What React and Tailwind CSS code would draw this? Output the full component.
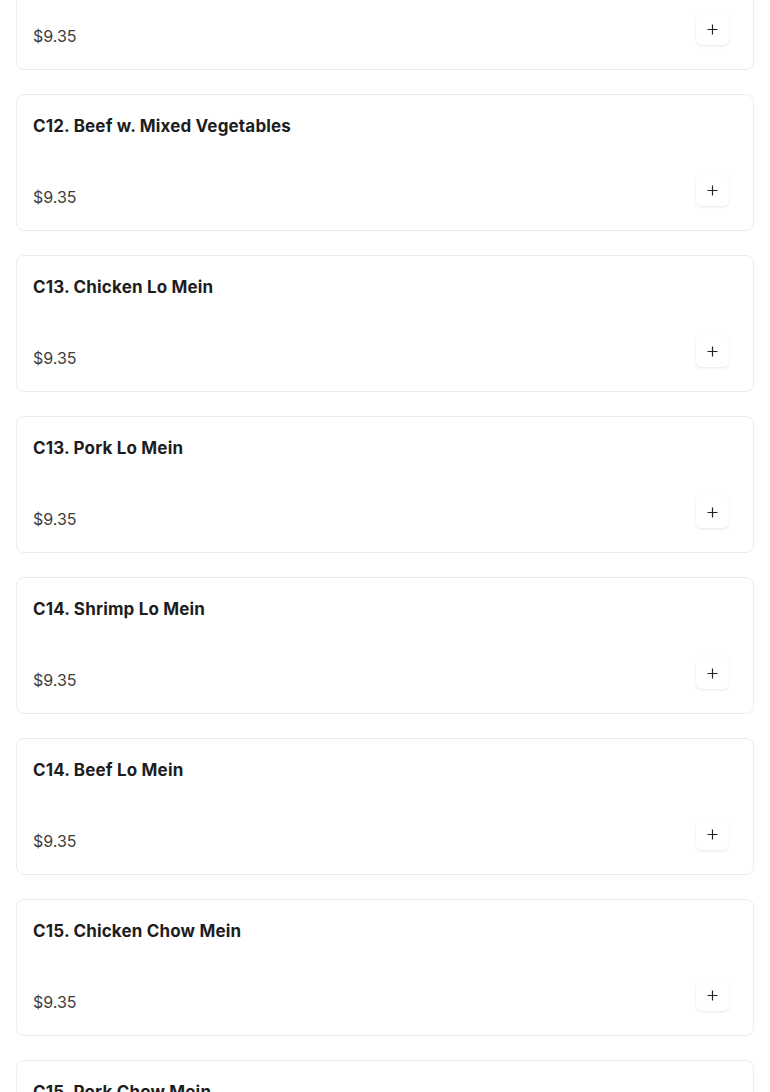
import React from 'react';

const items = [
  { id: 'c12a', name: 'C12. Beef w. Broccoli', price: 9.35 },
  { id: 'c12b', name: 'C12. Beef w. Mixed Vegetables', price: 9.35 },
  { id: 'c13a', name: 'C13. Chicken Lo Mein', price: 9.35 },
  { id: 'c13b', name: 'C13. Pork Lo Mein', price: 9.35 },
  { id: 'c14a', name: 'C14. Shrimp Lo Mein', price: 9.35 },
  { id: 'c14b', name: 'C14. Beef Lo Mein', price: 9.35 },
  { id: 'c15a', name: 'C15. Chicken Chow Mein', price: 9.35 },
  { id: 'c15b', name: 'C15. Pork Chow Mein', price: 9.35 },
];

function PlusIcon() {
  return (
    <svg width="11" height="11" viewBox="0 0 11 11" fill="none">
      <path d="M5.5 0.5v10M0.5 5.5h10" stroke="#222" strokeWidth="1.2" />
    </svg>
  );
}

export default function App() {
  return (
    <div className="h-screen overflow-hidden bg-white font-['Inter','Liberation_Sans',sans-serif]">
      {/* scrolled list: first card partly above the fold */}
      <div className="-mt-[67px] px-4 flex flex-col gap-6">
        {items.map((item) => (
          <div
            key={item.id}
            className="h-[137px] border border-[#ececec] rounded-lg bg-white pl-4 pr-6 pt-4 pb-[21px] flex flex-col justify-between"
          >
            <h3 className="text-[17px] leading-[30px] font-bold tracking-[0.01em] text-[#1d1d1d]">{item.name}</h3>
            <div className="flex justify-between items-end">
              <span className="text-[16px] leading-6 text-[#3d3d3d]">${item.price.toFixed(2)}</span>
              <button className="mb-[3px] w-[33px] h-8 rounded-md bg-white shadow-[0_1px_3px_rgba(0,0,0,0.1)] flex items-center justify-center">
                <PlusIcon />
              </button>
            </div>
          </div>
        ))}
      </div>
    </div>
  );
}
